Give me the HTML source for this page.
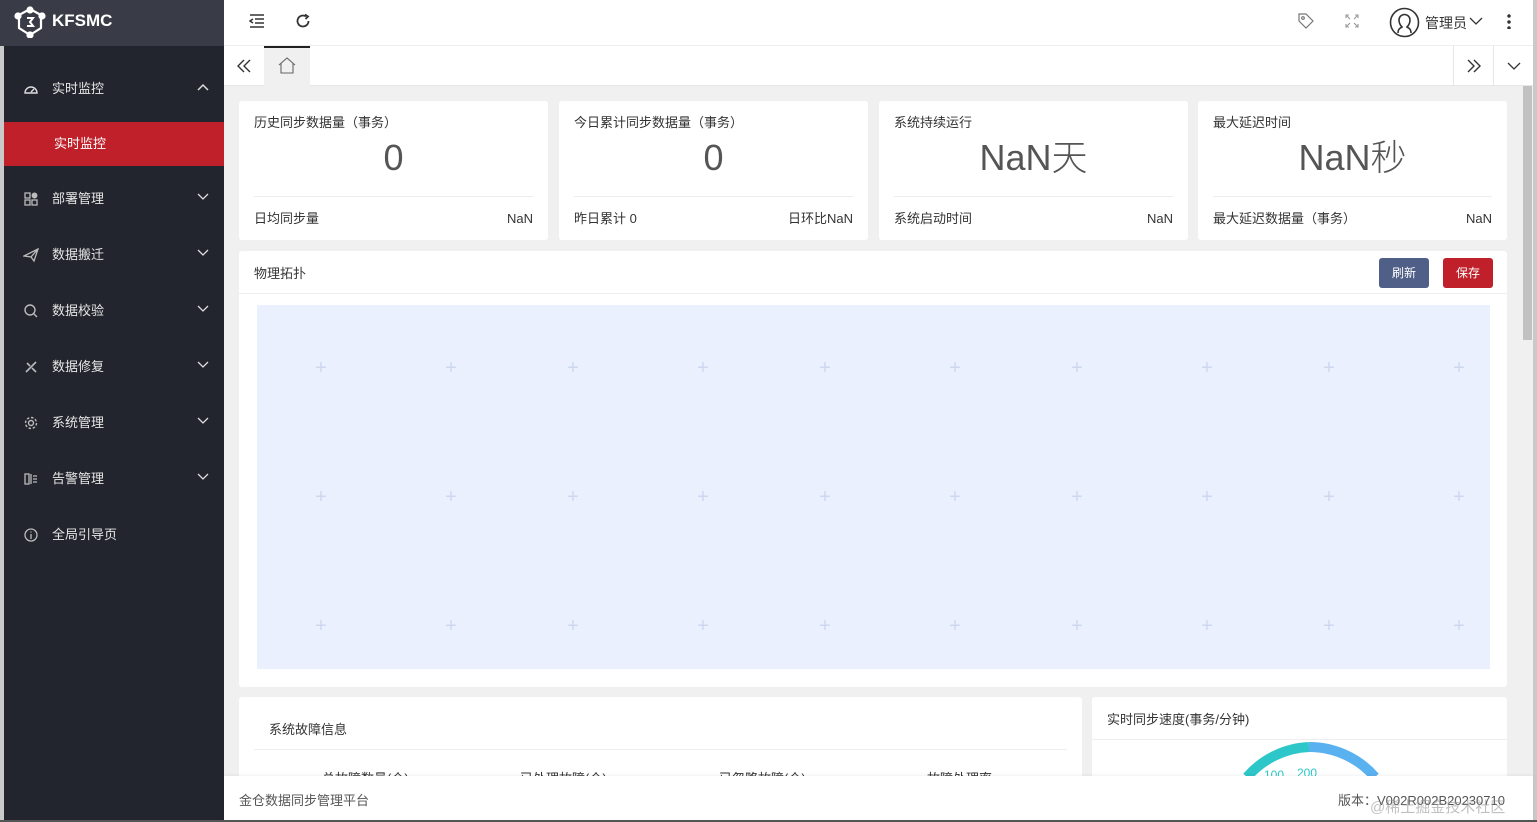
<!DOCTYPE html>
<html><head><meta charset="utf-8"><style>
*{margin:0;padding:0;box-sizing:border-box}
body{width:1537px;height:822px;overflow:hidden;position:relative;background:#f0f0f0;font-family:"Liberation Sans","Noto Sans CJK SC",sans-serif;color:#333;font-size:13px}
.abs{position:absolute}
.side{left:0;top:0;width:224px;height:822px;background:#22252e;border-left:4px solid #c9c9c9}
.logo{left:0;top:0;width:224px;height:46px;background:#393c46;color:#fff;font-weight:bold;font-size:17px}
.mi{left:0;width:224px;height:56px;color:#e6e6e6;font-size:13px}
.mi .t{position:absolute;left:52px;top:0;line-height:56px}
.mi .ic{position:absolute;left:23px;top:20px;width:16px;height:16px}
.mi .ar{position:absolute;left:196px;top:20px}
.card{background:#fff;border-radius:3px}
.ctitle{position:absolute;left:15px;top:13px;font-size:13px;color:#333;line-height:18px}
.big{position:absolute;left:0;right:0;top:36px;text-align:center;font-size:36px;color:#555;font-weight:300;line-height:42px}
.hr{position:absolute;left:15px;right:15px;top:95px;border-top:1px solid #eee}
.bl{position:absolute;left:15px;top:109px;line-height:18px}
.br{position:absolute;right:15px;top:109px;line-height:18px}
.plus{position:absolute;color:#cdd8f0;font-size:20px;line-height:20px;width:20px;text-align:center;margin:-10px 0 0 -10px}
</style></head><body>
<div class="abs side"></div>
<div class="abs logo">
<svg class="abs" style="left:14px;top:6px" width="32" height="32" viewBox="0 0 32 32" fill="none" stroke="#fff" stroke-width="2.2"><path d="M16 3L27 9V22L16 29L5 22V9Z"/><circle cx="16" cy="4" r="2.5" fill="#fff"/><circle cx="4" cy="10" r="2.5" fill="#fff"/><circle cx="28" cy="10" r="2.5" fill="#fff"/><circle cx="16" cy="29" r="2.5" fill="#fff"/><path d="M13 12h6l-3 4 3 4h-6" stroke-width="2"/></svg>
<div class="abs" style="left:52px;top:11px">KFSMC</div></div>
<div class="abs mi" style="top:61px"><svg class="ic" viewBox="0 0 16 16" fill="none" stroke="#ddd" stroke-width="1.4"><path d="M2 12a6 6 0 1 1 12 0z"/><path d="M8 11l3-3"/></svg><span class="t">实时监控</span><svg class="ar" width="14" height="10" viewBox="0 0 14 10" fill="none" stroke="#ddd" stroke-width="1.5" style="top:22px"><path d="M2 7l5-5 5 5"/></svg></div>
<div class="abs" style="left:4px;top:122px;width:220px;height:44px;background:#c0202a;color:#fff;line-height:44px;padding-left:50px">实时监控</div>
<div class="abs mi" style="top:171px"><svg class="ic" viewBox="0 0 16 16" fill="none" stroke="#bbb" stroke-width="1.3"><rect x="2" y="2" width="5" height="5"/><rect x="2" y="9" width="5" height="5"/><rect x="9" y="9" width="5" height="5"/><circle cx="11.5" cy="4.5" r="2.3" fill="#bbb"/></svg><span class="t">部署管理</span><svg class="ar" width="14" height="10" viewBox="0 0 14 10" fill="none" stroke="#ddd" stroke-width="1.3"><path d="M2 3l5 5 5-5"/></svg></div>
<div class="abs mi" style="top:227px"><svg class="ic" viewBox="0 0 16 16" fill="none" stroke="#bbb" stroke-width="1.3"><path d="M1 9L15 2 11 14 8 10z M8 10l7-8"/></svg><span class="t">数据搬迁</span><svg class="ar" width="14" height="10" viewBox="0 0 14 10" fill="none" stroke="#ddd" stroke-width="1.3"><path d="M2 3l5 5 5-5"/></svg></div>
<div class="abs mi" style="top:283px"><svg class="ic" viewBox="0 0 16 16" fill="none" stroke="#bbb" stroke-width="1.4"><circle cx="7" cy="7" r="5"/><path d="M11 11l3 3"/></svg><span class="t">数据校验</span><svg class="ar" width="14" height="10" viewBox="0 0 14 10" fill="none" stroke="#ddd" stroke-width="1.3"><path d="M2 3l5 5 5-5"/></svg></div>
<div class="abs mi" style="top:339px"><svg class="ic" viewBox="0 0 16 16" fill="none" stroke="#bbb" stroke-width="1.6"><path d="M3 13L13 3M4 4l3 3M9 9l4 4"/></svg><span class="t">数据修复</span><svg class="ar" width="14" height="10" viewBox="0 0 14 10" fill="none" stroke="#ddd" stroke-width="1.3"><path d="M2 3l5 5 5-5"/></svg></div>
<div class="abs mi" style="top:395px"><svg class="ic" viewBox="0 0 16 16" fill="none" stroke="#bbb" stroke-width="1.4"><circle cx="8" cy="8" r="2.5"/><circle cx="8" cy="8" r="5.5" stroke-dasharray="2.5 1.8"/></svg><span class="t">系统管理</span><svg class="ar" width="14" height="10" viewBox="0 0 14 10" fill="none" stroke="#ddd" stroke-width="1.3"><path d="M2 3l5 5 5-5"/></svg></div>
<div class="abs mi" style="top:451px"><svg class="ic" viewBox="0 0 16 16" fill="none" stroke="#bbb" stroke-width="1.3"><rect x="2" y="3" width="4" height="10"/><path d="M8 3v10M10 5h4M10 8h4M10 11h4"/></svg><span class="t">告警管理</span><svg class="ar" width="14" height="10" viewBox="0 0 14 10" fill="none" stroke="#ddd" stroke-width="1.3"><path d="M2 3l5 5 5-5"/></svg></div>
<div class="abs mi" style="top:507px"><svg class="ic" viewBox="0 0 16 16" fill="none" stroke="#bbb" stroke-width="1.3"><circle cx="8" cy="8" r="6"/><path d="M8 7v5M8 4.5v1"/></svg><span class="t">全局引导页</span></div>

<!-- header -->
<div class="abs" style="left:224px;top:0;width:1313px;height:46px;background:#fff;border-bottom:1px solid #eee"></div>
<svg class="abs" style="left:249px;top:13px" width="16" height="16" viewBox="0 0 16 16" fill="none" stroke="#333" stroke-width="1.5"><path d="M1 2h14M6 6h9M6 10h9M1 14h14M4 6L1 8l3 2"/></svg>
<svg class="abs" style="left:295px;top:13px" width="16" height="16" viewBox="0 0 16 16" fill="none" stroke="#333" stroke-width="1.8"><path d="M13.5 8A5.5 5.5 0 1 1 11 3.4"/><path d="M10 1.5l3 2-2.5 2.5" /></svg>
<svg class="abs" style="left:1297px;top:12px" width="18" height="18" viewBox="0 0 18 18" fill="none" stroke="#777" stroke-width="1.2"><path d="M2 2h7l7 7-7 7-7-7z"/><circle cx="6" cy="6" r="1.3"/></svg>
<svg class="abs" style="left:1345px;top:14px" width="14" height="14" viewBox="0 0 14 14" fill="none" stroke="#999" stroke-width="1.1"><path d="M1 4V1h3M10 1h3v3M13 10v3h-3M4 13H1v-3M1 1l4 4M13 1l-4 4M13 13l-4-4M1 13l4-4"/></svg>
<svg class="abs" style="left:1389px;top:7px" width="31" height="31" viewBox="0 0 31 31" fill="none" stroke="#333" stroke-width="1.6"><circle cx="15.5" cy="15.5" r="14"/><path d="M9 26c0-5 3-5 4-6-2-2-3-4-3-7a5.5 5.5 0 0 1 11 0c0 3-1 5-3 7 1 1 4 1 4 6"/></svg>
<div class="abs" style="left:1425px;top:13px;font-size:14px">管理员</div>
<svg class="abs" style="left:1468px;top:15px" width="16" height="12" viewBox="0 0 16 12" fill="none" stroke="#333" stroke-width="1.3"><path d="M2 3l6 6 6-6"/></svg>
<div class="abs" style="left:1507px;top:13px;width:4px;height:16px;background:radial-gradient(circle,#333 1.5px,transparent 2px) 0 0/4px 6px"></div>
<!-- tabs -->
<div class="abs" style="left:224px;top:46px;width:1313px;height:40px;background:#fff;border-bottom:1px solid #e6e6e6"></div>
<svg class="abs" style="left:236px;top:59px" width="16" height="14" viewBox="0 0 16 14" fill="none" stroke="#333" stroke-width="1.4"><path d="M8 1L2 7l6 6M14 1L8 7l6 6"/></svg>
<div class="abs" style="left:264px;top:46px;width:46px;height:40px;background:#f0f0f0;border-top:2px solid #222"></div>
<svg class="abs" style="left:278px;top:57px" width="18" height="17" viewBox="0 0 18 17" fill="none" stroke="#666" stroke-width="1.1"><path d="M1 8L9 1l8 7M3 6.5V16h12V6.5"/></svg>
<div class="abs" style="left:1453px;top:46px;width:1px;height:40px;background:#e6e6e6"></div>
<div class="abs" style="left:1493px;top:46px;width:1px;height:40px;background:#e6e6e6"></div>
<svg class="abs" style="left:1466px;top:59px" width="16" height="14" viewBox="0 0 16 14" fill="none" stroke="#333" stroke-width="1.4"><path d="M2 1l6 6-6 6M8 1l6 6-6 6"/></svg>
<svg class="abs" style="left:1506px;top:61px" width="16" height="10" viewBox="0 0 16 10" fill="none" stroke="#333" stroke-width="1.3"><path d="M2 2l6 6 6-6"/></svg>
<!-- scrollbar -->
<div class="abs" style="left:1520px;top:86px;width:17px;height:690px;background:#f0f0f0"></div>
<div class="abs" style="left:1523px;top:86px;width:9px;height:254px;background:#c1c1c1"></div>
<div class="abs" style="left:1533px;top:0;width:4px;height:822px;background:#c9c9c9"></div>

<!-- cards -->
<div class="abs card" style="left:239px;top:101px;width:309px;height:139px"><div class="ctitle">历史同步数据量（事务）</div><div class="big">0</div><div class="hr"></div><div class="bl">日均同步量</div><div class="br">NaN</div></div>
<div class="abs card" style="left:559px;top:101px;width:309px;height:139px"><div class="ctitle">今日累计同步数据量（事务）</div><div class="big">0</div><div class="hr"></div><div class="bl">昨日累计 0</div><div class="br">日环比NaN</div></div>
<div class="abs card" style="left:879px;top:101px;width:309px;height:139px"><div class="ctitle">系统持续运行</div><div class="big">NaN天</div><div class="hr"></div><div class="bl">系统启动时间</div><div class="br">NaN</div></div>
<div class="abs card" style="left:1198px;top:101px;width:309px;height:139px"><div class="ctitle">最大延迟时间</div><div class="big">NaN秒</div><div class="hr"></div><div class="bl">最大延迟数据量（事务）</div><div class="br">NaN</div></div>

<div class="abs card" style="left:239px;top:251px;width:1268px;height:436px">
<div class="abs" style="left:15px;top:12px">物理拓扑</div>
<div class="abs" style="left:1140px;top:7px;width:50px;height:30px;background:#4f5f88;color:#fff;border-radius:3px;text-align:center;line-height:30px;font-size:12px">刷新</div>
<div class="abs" style="left:1204px;top:7px;width:50px;height:30px;background:#c0202a;color:#fff;border-radius:3px;text-align:center;line-height:30px;font-size:12px">保存</div>
<div class="abs" style="left:0;right:0;top:42px;border-top:1px solid #eee"></div>
</div>
<div class="abs" style="left:257px;top:305px;width:1233px;height:364px;background:#eaf0fd"></div>
<div id="pl"></div>

<div class="abs card" style="left:239px;top:697px;width:843px;height:90px">
<div class="abs" style="left:30px;top:22px">系统故障信息</div>
<div class="abs" style="left:15px;right:15px;top:52px;border-top:1px solid #eee"></div>
<div class="abs" style="left:83px;top:71px">总故障数量(个)</div><div class="abs" style="left:281px;top:71px">已处理故障(个)</div><div class="abs" style="left:480px;top:71px">已忽略故障(个)</div><div class="abs" style="left:688px;top:71px">故障处理率</div>
</div>
<div class="abs card" style="left:1092px;top:697px;width:415px;height:90px;overflow:hidden">
<div class="abs" style="left:15px;top:12px">实时同步速度(事务/分钟)</div>
<div class="abs" style="left:0;right:0;top:42px;border-top:1px solid #eee"></div>
<svg class="abs" style="left:0;top:0" width="415" height="90"><path d="M155 80A87 87 0 0 1 217 50" fill="none" stroke="#2ec7c9" stroke-width="10"/><path d="M217 50A87 87 0 0 1 283 80" fill="none" stroke="#5ab1ef" stroke-width="10"/><text x="172" y="82" font-size="12" fill="#2ec7c9" font-family="Liberation Sans">100</text><text x="205" y="80" font-size="12" fill="#2ec7c9" font-family="Liberation Sans">200</text></svg>
</div>

<div class="abs" style="left:224px;top:776px;width:1309px;height:44px;background:#fff;box-shadow:0 -1px 3px rgba(0,0,0,.06)"></div>
<div class="abs" style="left:239px;top:790px;color:#555">金仓数据同步管理平台</div>
<div class="abs" style="left:1338px;top:790px;color:#555">版本：V002R002B20230710</div>
<div class="abs" style="left:1370px;top:796px;color:rgba(150,150,150,.6);font-size:15px">@稀土掘金技术社区</div>
<div class="abs" style="left:0;top:820px;width:1537px;height:2px;background:#555"></div>
<script>
var xs=[321,451,573,703,825,955,1077,1207,1329,1459],ys=[368,497,626],h='';
xs.forEach(function(x){ys.forEach(function(y){h+='<div class="plus" style="left:'+x+'px;top:'+y+'px">+</div>';});});
document.getElementById('pl').innerHTML=h;
</script>
</body></html>
